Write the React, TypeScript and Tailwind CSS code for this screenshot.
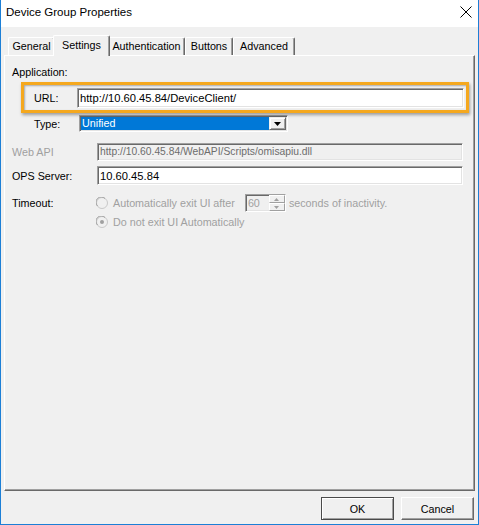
import React from "react";

const sunken =
  "border border-t-[#a0a0a0] border-l-[#a0a0a0] border-r-white border-b-white shadow-[inset_1px_1px_0_#696969,inset_-1px_-1px_0_#e3e3e3]";

function Tab({ label, w, selected }: { label: string; w: number; selected?: boolean }) {
  if (selected) {
    return (
      <div
        className="relative z-10 -mx-[2px] h-[21px] -mb-[1px] bg-[#f0f0f0] border-t border-l border-t-white border-l-white border-r border-r-[#696969] shadow-[inset_-1px_0_0_#a0a0a0] rounded-t-[2px] flex items-start justify-center pt-[3px]"
        style={{ width: w + 4 }}
      >
        <span className="leading-[13px]">{label}</span>
      </div>
    );
  }
  return (
    <div
      className="h-[18px] bg-[#f0f0f0] border-t border-l border-t-white border-l-white border-r border-r-[#696969] shadow-[inset_-1px_0_0_#a0a0a0] rounded-t-[2px] flex items-start justify-center pt-[2px]"
      style={{ width: w }}
    >
      <span className="leading-[13px]">{label}</span>
    </div>
  );
}

function Radio({ checked }: { checked?: boolean }) {
  return (
    <svg width="12" height="12" viewBox="0 0 12 12" className="shrink-0">
      <circle cx="6" cy="6" r="5.5" fill="#f0f0f0" stroke="#c8c8c8" />
      <path d="M1.5 9 A5 5 0 0 1 9 1.5" fill="none" stroke="#a0a0a0" strokeWidth="1" />
      {checked && <circle cx="6" cy="6" r="2" fill="#a0a0a0" />}
    </svg>
  );
}

export default function App() {
  return (
    <div className="w-[479px] h-[525px] bg-[#f0f0f0] font-['Liberation_Sans',Arial,sans-serif] text-[10.75px] text-black flex flex-col border-x border-b border-[#1c7fd6] overflow-hidden">
      {/* Title bar */}
      <div className="h-[27px] bg-white flex items-start justify-between pl-[5px] pr-[6px] shrink-0">
        <span className="text-[11.5px] leading-[14px] mt-[5px]">Device Group Properties</span>
        <svg width="12" height="12" viewBox="0 0 12 12" className="mt-[6px]">
          <path d="M0.5 0.5 L11.5 11.5 M11.5 0.5 L0.5 11.5" stroke="#000" strokeWidth="1" />
        </svg>
      </div>

      {/* Body */}
      <div className="flex-1 flex flex-col px-[3px] pt-[8px]">
        {/* Tabs */}
        <div className="flex items-end h-[20px] pl-[4px]">
          <Tab label="General" w={47} />
          <Tab label="Settings" w={53} selected />
          <Tab label="Authentication" w={77} />
          <Tab label="Buttons" w={48} />
          <Tab label="Advanced" w={62} />
        </div>

        {/* Panel */}
        <div className="h-[436px] border border-t-white border-l-white border-r-[#696969] border-b-[#696969] shadow-[inset_-1px_-1px_0_#a0a0a0] flex flex-col">
          <div className="ml-[7px] mt-[9px] leading-[14px]">Application:</div>

          {/* URL row */}
          <div className="relative flex items-center ml-[29px] mt-[9px] w-[430px] h-[20px]">
            <span className="w-[43px] leading-[14px]">URL:</span>
            <div className={`w-[387px] h-[20px] bg-white flex items-center pl-[2px] ${sunken}`}>
              <span className="leading-[14px] text-[11.2px]">http://10.60.45.84/DeviceClient/</span>
            </div>
            <div className="absolute left-[-13px] top-[-6px] w-[448px] h-[31px] border-[3px] border-[#f5a81e] shadow-[1px_2px_3px_rgba(0,0,0,0.35),inset_1px_1px_2px_rgba(0,0,0,0.3)] pointer-events-none" />
          </div>

          {/* Type row */}
          <div className="flex items-center ml-[29px] mt-[7px] h-[17px]">
            <span className="w-[45px] leading-[14px]">Type:</span>
            <div className={`w-[209px] h-[17px] bg-white flex items-stretch ${sunken} p-[1px]`}>
              <div className="flex-1 bg-[#0078d7] text-white flex items-center pl-[1px] leading-[13px]">Unified</div>
              <div className="w-[17px] bg-[#f0f0f0] border border-t-[#f0f0f0] border-l-[#f0f0f0] border-r-[#696969] border-b-[#696969] shadow-[inset_1px_1px_0_#fff,inset_-1px_-1px_0_#a0a0a0] flex items-center justify-center">
                <svg width="7" height="4" viewBox="0 0 7 4">
                  <path d="M0 0 H7 L3.5 4 Z" fill="#000" />
                </svg>
              </div>
            </div>
          </div>

          {/* Web API row */}
          <div className="flex items-center ml-[7px] mt-[11px] h-[18px]">
            <span className="w-[85px] leading-[14px] text-[#a0a0a0]">Web API</span>
            <div className={`w-[366px] h-[18px] bg-[#f0f0f0] flex items-center pl-[2px] ${sunken}`}>
              <span className="leading-[14px] text-[#6d6d6d] text-[10.3px]">http://10.60.45.84/WebAPI/Scripts/omisapiu.dll</span>
            </div>
          </div>

          {/* OPS row */}
          <div className="flex items-center ml-[7px] mt-[5px] h-[19px]">
            <span className="w-[85px] leading-[14px]">OPS Server:</span>
            <div className={`w-[366px] h-[19px] bg-white flex items-center pl-[2px] ${sunken}`}>
              <span className="leading-[14px] text-[11.2px]">10.60.45.84</span>
            </div>
          </div>

          {/* Timeout row */}
          <div className="flex items-center ml-[7px] mt-[9px] h-[18px]">
            <span className="w-[84px] leading-[14px]">Timeout:</span>
            <Radio />
            <span className="ml-[5px] leading-[14px] text-[#a0a0a0]">Automatically exit UI after</span>
            <div className={`ml-[10px] w-[41px] h-[18px] bg-[#f0f0f0] flex items-stretch ${sunken}`}>
              <span className="flex-1 pl-[2px] leading-[14px] text-[#a0a0a0] flex items-center">60</span>
              <div className="w-[16px] flex flex-col">
                <div className="flex-1 border border-t-white border-l-white border-r-[#a0a0a0] border-b-[#a0a0a0] flex items-center justify-center">
                  <svg width="5" height="3" viewBox="0 0 5 3"><path d="M0 3 H5 L2.5 0 Z" fill="#a0a0a0" /></svg>
                </div>
                <div className="flex-1 border border-t-white border-l-white border-r-[#a0a0a0] border-b-[#a0a0a0] flex items-center justify-center">
                  <svg width="5" height="3" viewBox="0 0 5 3"><path d="M0 0 H5 L2.5 3 Z" fill="#a0a0a0" /></svg>
                </div>
              </div>
            </div>
            <span className="ml-[3px] leading-[14px] text-[#a0a0a0]">seconds of inactivity.</span>
          </div>

          {/* Radio 2 */}
          <div className="flex items-center ml-[91px] mt-[3px] h-[13px]">
            <Radio checked />
            <span className="ml-[5px] leading-[14px] text-[#a0a0a0]">Do not exit UI Automatically</span>
          </div>
        </div>

        {/* Buttons */}
        <div className="flex justify-end gap-[7px] pt-[6px] pr-[1px]">
          <button className="w-[73px] h-[23px] bg-[#f0f0f0] border border-[#4a4a4a] shadow-[inset_1px_1px_0_#fff,inset_-1px_-1px_0_#a0a0a0] leading-[14px]">
            OK
          </button>
          <button className="w-[73px] h-[23px] bg-[#f0f0f0] border border-t-white border-l-white border-r-[#696969] border-b-[#696969] shadow-[inset_-1px_-1px_0_#a0a0a0] leading-[14px]">
            Cancel
          </button>
        </div>
      </div>
    </div>
  );
}
